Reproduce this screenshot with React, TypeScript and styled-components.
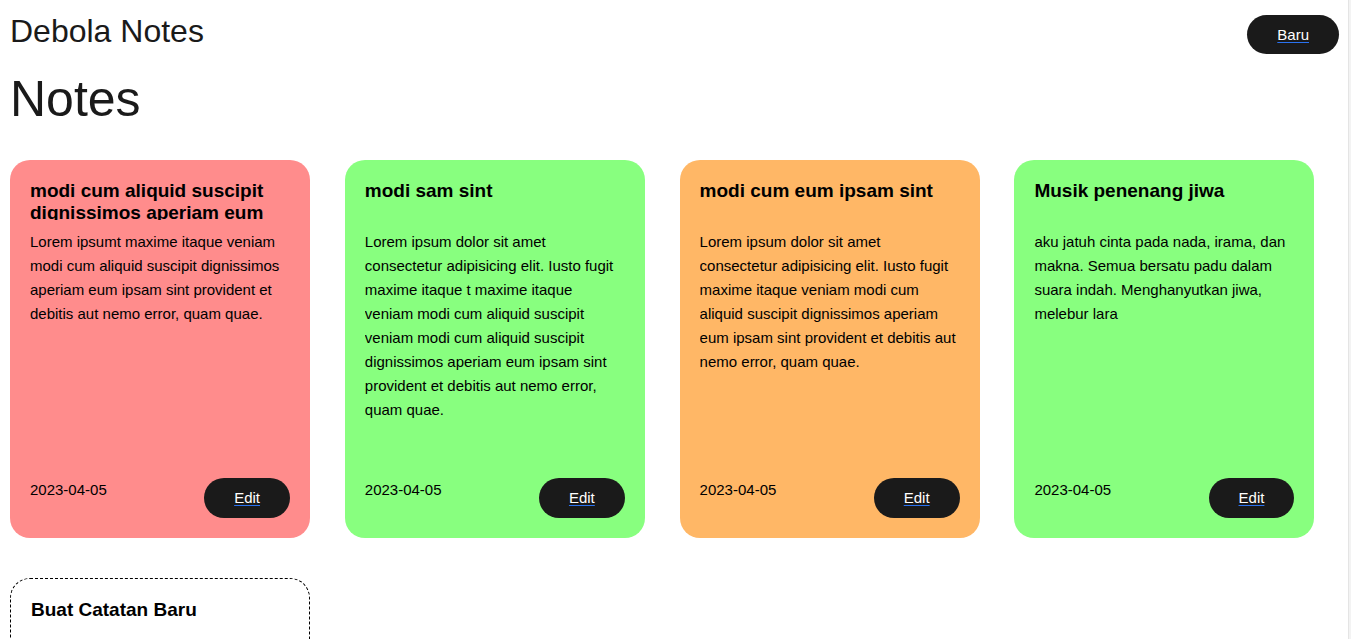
import React from "react";
import styled, { createGlobalStyle } from "styled-components";

const GlobalStyle = createGlobalStyle`
  html, body {
    margin: 0;
    padding: 0;
    background: #ffffff;
  }
  body {
    font-family: "Liberation Sans", Arial, sans-serif;
    color: #000;
  }
  * { box-sizing: border-box; }
`;

const Shell = styled.div`
  display: flex;
  min-height: 100vh;
  height: 100vh;
  overflow: hidden;
`;

const Main = styled.main`
  flex: 1;
  padding: 13px 10px 0;
`;

const Gutter = styled.div`
  width: 3px;
  flex: none;
  background: #f3f3f3;
  border-left: 1px solid #e4e4e4;
`;

const Header = styled.header`
  display: flex;
  justify-content: space-between;
  align-items: flex-start;
`;

const Brand = styled.h1`
  margin: 0;
  font-size: 32px;
  line-height: 37px;
  font-weight: 400;
  color: #1a1a1a;
`;

const PillLink = styled.a<{ $h: number }>`
  display: inline-flex;
  align-items: center;
  justify-content: center;
  height: ${(p) => p.$h}px;
  padding: 0 30px;
  border-radius: 999px;
  background: #1a1a1a;
  color: #ffffff;
  font-size: 15px;
  text-decoration: underline;
  text-decoration-color: #2a72f0;
  text-underline-offset: 2px;
  cursor: pointer;
`;

const HeaderButton = styled(PillLink)`
  margin-top: 2px;
  margin-right: -1px;
`;

const EditButton = styled(PillLink)`
  padding-bottom: 1px;
`;

const PageTitle = styled.h2`
  margin: 16px 0 32px;
  font-size: 50px;
  line-height: 58px;
  font-weight: 400;
  color: #1a1a1a;
`;

const Grid = styled.section`
  display: grid;
  grid-template-columns: repeat(4, 300px);
  column-gap: 34.8px;
  row-gap: 40px;
`;

const Card = styled.article<{ $bg: string }>`
  display: flex;
  flex-direction: column;
  height: 378px;
  padding: 20px;
  border-radius: 20px;
  background: ${(p) => p.$bg};
`;

const CardTitle = styled.h3`
  margin: 0;
  height: 40px;
  overflow: hidden;
  font-size: 19px;
  line-height: 22px;
  font-weight: 700;
`;

const CardBody = styled.p`
  flex: 1;
  margin: 10px 0 0;
  font-size: 15px;
  line-height: 24px;
  overflow: hidden;
`;

const CardFooter = styled.div`
  display: flex;
  justify-content: space-between;
  align-items: flex-start;
`;

const DateText = styled.span`
  font-size: 15px;
  line-height: 24px;
`;

const NewCard = styled.div`
  height: 200px;
  padding: 20px 20px;
  border: 1px dashed #000;
  border-radius: 20px;
`;

const NewTitle = styled.h3`
  margin: 0;
  font-size: 19px;
  line-height: 22px;
  font-weight: 700;
`;

type Note = { title: string; body: string; date: string; color: string };

const notes: Note[] = [
  {
    title: "modi cum aliquid suscipit dignissimos aperiam eum",
    body: "Lorem ipsumt maxime itaque veniam modi cum aliquid suscipit dignissimos aperiam eum ipsam sint provident et debitis aut nemo error, quam quae.",
    date: "2023-04-05",
    color: "#ff8c8c",
  },
  {
    title: "modi sam sint",
    body: "Lorem ipsum dolor sit amet consectetur adipisicing elit. Iusto fugit maxime itaque t maxime itaque veniam modi cum aliquid suscipit veniam modi cum aliquid suscipit dignissimos aperiam eum ipsam sint provident et debitis aut nemo error, quam quae.",
    date: "2023-04-05",
    color: "#88ff7f",
  },
  {
    title: "modi cum eum ipsam sint",
    body: "Lorem ipsum dolor sit amet consectetur adipisicing elit. Iusto fugit maxime itaque veniam modi cum aliquid suscipit dignissimos aperiam eum ipsam sint provident et debitis aut nemo error, quam quae.",
    date: "2023-04-05",
    color: "#ffb766",
  },
  {
    title: "Musik penenang jiwa",
    body: "aku jatuh cinta pada nada, irama, dan makna. Semua bersatu padu dalam suara indah. Menghanyutkan jiwa, melebur lara",
    date: "2023-04-05",
    color: "#88ff7f",
  },
];

export default function App() {
  return (
    <>
      <GlobalStyle />
      <Shell>
        <Main>
          <Header>
            <Brand>Debola Notes</Brand>
            <HeaderButton $h={39}>Baru</HeaderButton>
          </Header>
          <PageTitle>Notes</PageTitle>
          <Grid>
            {notes.map((n, i) => (
              <Card key={i} $bg={n.color}>
                <CardTitle>{n.title}</CardTitle>
                <CardBody>{n.body}</CardBody>
                <CardFooter>
                  <DateText>{n.date}</DateText>
                  <EditButton $h={40}>Edit</EditButton>
                </CardFooter>
              </Card>
            ))}
            <NewCard>
              <NewTitle>Buat Catatan Baru</NewTitle>
            </NewCard>
          </Grid>
        </Main>
        <Gutter />
      </Shell>
    </>
  );
}
